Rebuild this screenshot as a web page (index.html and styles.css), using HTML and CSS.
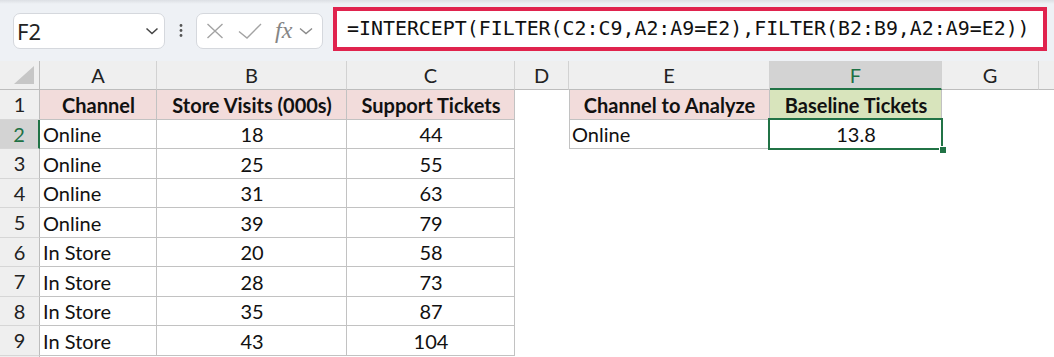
FILE: index.html
```html
<!DOCTYPE html>
<html lang="en">
<head>
  <meta charset="UTF-8" />
  <title>INTERCEPT with FILTER</title>
  <link rel="stylesheet" href="styles.css">
</head>
<body>

  <div class="toolbar">
    <div class="namebox">
      <span class="ref">F2</span>
      <svg width="14" height="8" viewBox="0 0 14 8"><path d="M1.5 1.5 L7 6.5 L12.5 1.5" fill="none" stroke="#444" stroke-width="1.5"/></svg>
    </div>
    <div class="sep">
      <svg width="4" height="16" viewBox="0 0 4 16"><circle cx="2" cy="2.5" r="1.4" fill="#555"/><circle cx="2" cy="7.5" r="1.4" fill="#555"/><circle cx="2" cy="12.5" r="1.4" fill="#555"/></svg>
    </div>
    <div class="fnbox">
      <svg class="ico-x" width="18" height="16" viewBox="0 0 18 16"><path d="M1.5 1 L16.5 15 M16.5 1 L1.5 15" fill="none" stroke="#a3a3a3" stroke-width="1.4"/></svg>
      <svg class="ico-ok" width="24" height="16" viewBox="0 0 24 16"><path d="M1 8.5 L9 15 L23 1" fill="none" stroke="#a3a3a3" stroke-width="1.4"/></svg>
      <span class="fx">fx</span>
      <svg class="ico-dd" width="14" height="8" viewBox="0 0 14 8"><path d="M1 1.5 L7 6.5 L13 1.5" fill="none" stroke="#8a8a8a" stroke-width="1.4"/></svg>
    </div>
    <div class="formula">=INTERCEPT(FILTER(C2:C9,A2:A9=E2),FILTER(B2:B9,A2:A9=E2))</div>
  </div>

  <div class="sheet">
    <!-- column headers -->
    <div class="ch corner">
      <svg width="20" height="18" viewBox="0 0 20 18"><path d="M20 0 L20 18 L0 18 Z" fill="#c6c6c6"/></svg>
    </div>
    <div class="ch">A</div>
    <div class="ch">B</div>
    <div class="ch">C</div>
    <div class="ch">D</div>
    <div class="ch">E</div>
    <div class="ch active">F</div>
    <div class="ch">G</div>
    <div class="ch last"></div>

    <!-- row 1 -->
    <div class="rh">1</div>
    <div class="c b hd pink">Channel</div>
    <div class="c b hd pink">Store Visits (000s)</div>
    <div class="c b hd pink">Support Tickets</div>
    <div class="c"></div>
    <div class="c b bl hd pink">Channel to Analyze</div>
    <div class="c b hd green">Baseline Tickets</div>

    <!-- row 2 -->
    <div class="rh active">2</div>
    <div class="c b">Online</div>
    <div class="c b num">18</div>
    <div class="c b num">44</div>
    <div class="c"></div>
    <div class="c b bl">Online</div>
    <div class="c b num sel">13.8</div>

    <div class="rh">3</div>
    <div class="c b">Online</div>
    <div class="c b num">25</div>
    <div class="c b num">55</div>

    <div class="rh">4</div>
    <div class="c b">Online</div>
    <div class="c b num">31</div>
    <div class="c b num">63</div>

    <div class="rh">5</div>
    <div class="c b">Online</div>
    <div class="c b num">39</div>
    <div class="c b num">79</div>

    <div class="rh">6</div>
    <div class="c b">In Store</div>
    <div class="c b num">20</div>
    <div class="c b num">58</div>

    <div class="rh">7</div>
    <div class="c b">In Store</div>
    <div class="c b num">28</div>
    <div class="c b num">73</div>

    <div class="rh">8</div>
    <div class="c b">In Store</div>
    <div class="c b num">35</div>
    <div class="c b num">87</div>

    <div class="rh">9</div>
    <div class="c b">In Store</div>
    <div class="c b num">43</div>
    <div class="c b num">104</div>

    <div class="rh"></div>
  </div>

</body>
</html>
```

FILE: styles.css
```css
body {
  margin: 0;
  width: 1054px;
  height: 357px;
  overflow: hidden;
  background: #fff;
  font-family: Lato, "Noto Sans", sans-serif;
  color: #111;
}

/* ---- formula toolbar ---- */

.toolbar {
  height: 61px;
  box-sizing: border-box;
  padding-top: 7px;
  display: flex;
  align-items: flex-start;
  background: linear-gradient(#dcdfe4 0, #eef1f5 4px);
}

.namebox,
.fnbox {
  margin-top: 6px;
  height: 36px;
  box-sizing: border-box;
  background: #fff;
  border: 1px solid #d5d8dd;
  border-radius: 7px;
  display: flex;
  align-items: center;
}

.namebox {
  margin-left: 13px;
  width: 152px;
  justify-content: space-between;
  padding: 0 5px 0 3px;
}

.ref {
  font-family: "Noto Sans", "Open Sans", sans-serif;
  font-size: 22px;
  line-height: 1;
  color: #222;
}

.sep {
  width: 31px;
  height: 48px;
  display: flex;
  align-items: center;
  justify-content: center;
}

.fnbox {
  width: 127px;
  padding-left: 9px;
}

.ico-x { margin-right: 14px; }
.ico-ok { margin-right: 13px; }

.fx {
  font-family: "Liberation Serif", serif;
  font-style: italic;
  font-size: 24px;
  color: #858585;
  line-height: 1;
  margin-right: 7px;
  margin-top: -3px;
}

.formula {
  margin-left: 10px;
  width: 714px;
  height: 44px;
  box-sizing: border-box;
  border: 4px solid #e0234e;
  background: #fff;
  padding-left: 10px;
  font-family: "DejaVu Sans Mono", monospace;
  font-size: 19.9px;
  line-height: 36px;
  color: #111;
  white-space: nowrap;
}

/* ---- sheet grid ---- */

.sheet {
  display: grid;
  grid-template-columns: 40px 117px 190px 168px 54px 201px 172px 97px 15px;
  grid-template-rows: 29px;
  grid-auto-rows: 29.5px;
  font-size: 20px;
}

.ch,
.rh {
  background: #efefef;
  color: #222;
  display: flex;
  align-items: center;
  justify-content: center;
  box-sizing: border-box;
}

.ch {
  border-right: 1px solid #d2d2d2;
  border-bottom: 1px solid #bdbdbd;
}

.ch.corner {
  justify-content: flex-end;
  align-items: flex-end;
  padding: 0 5px 5px 0;
  border-right-color: #bdbdbd;
}

.ch.last { border-right: none; }

.ch.active {
  background: #d3d3d3;
  color: #1e7145;
  border-bottom: 2px solid #217346;
}

.rh {
  grid-column: 1;
  border-right: 1px solid #bdbdbd;
  border-bottom: 1px solid #d6d6d6;
}

.rh.active {
  background: #d3d3d3;
  color: #1e7145;
  border-right: 2px solid #217346;
}

.c {
  display: flex;
  align-items: center;
  padding: 0 3px;
  white-space: nowrap;
  overflow: visible;
  min-width: 0;
}

.b { box-shadow: inset -1px -1px 0 #c2c2c2; }
.b.bl { box-shadow: inset -1px -1px 0 #c2c2c2, inset 1px 0 0 #c2c2c2; }

.num,
.hd { justify-content: center; }

.hd { font-weight: 700; }

.pink { background-color: #f2dcdb; }
.green { background-color: #d8e4bc; }

.sel { position: relative; }

.sel::after {
  content: "";
  position: absolute;
  left: -2px;
  top: -2px;
  right: -1px;
  bottom: -1px;
  border: 2px solid #217346;
}

.sel::before {
  content: "";
  position: absolute;
  right: -5px;
  bottom: -5px;
  width: 6px;
  height: 6px;
  background: #217346;
  border: 1px solid #fff;
  z-index: 1;
}
```
